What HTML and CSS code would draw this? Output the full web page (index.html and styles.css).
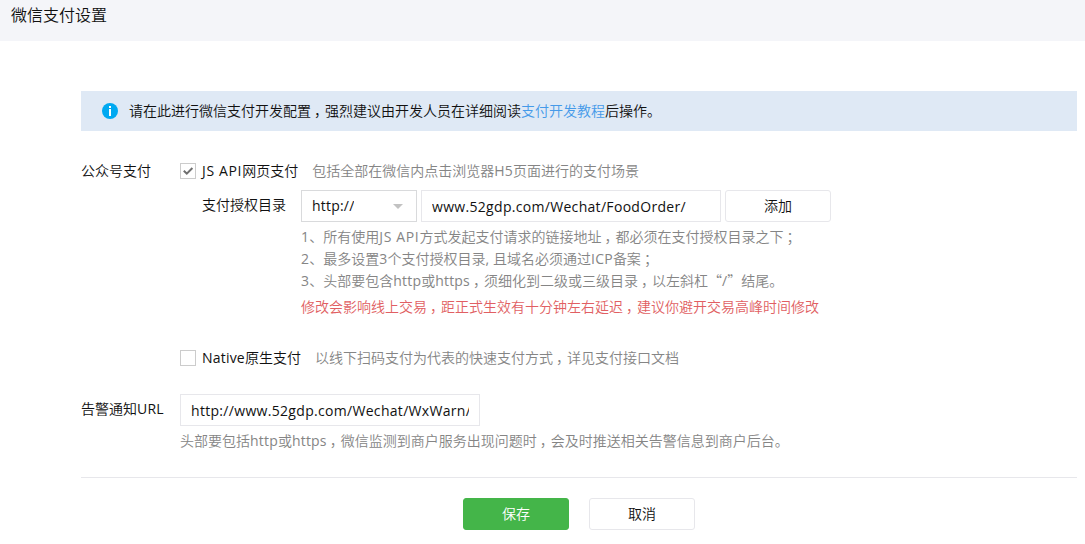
FILE: index.html
```html
<!DOCTYPE html>
<html lang="zh-CN">
<head>
<meta charset="utf-8">
<title>微信支付设置</title>
<link rel="stylesheet" href="styles.css">
</head>
<body>
<header class="page-header"><h1>微信支付设置</h1></header>
<main class="content">
  <div class="notice">
    <svg class="notice-icon" width="16" height="16" viewBox="0 0 16 16"><circle cx="8" cy="8" r="8" fill="#00a9f1"/><path d="M7 3h2v2H7zM7 6h2v7H7z" fill="#fff"/></svg>
    <p>请在此进行微信支付开发配置<span class="mark">，</span>强烈建议由开发人员在详细阅读<a class="link">支付开发教程</a>后操作。</p>
  </div>
  <section class="group">
    <div class="group-label">公众号支付</div>
    <div class="group-body">
      <label class="option">
        <span class="checkbox"><svg width="14" height="14" viewBox="0 0 14 14"><path d="M2.8 6.7 5.8 9.7 11.4 4" fill="none" stroke="#707070" stroke-width="2"/></svg></span>
        <span class="option-name"><span class="latin wide">JS API</span>网页支付</span>
        <span class="option-desc">包括全部在微信内点击浏览器<span class="latin">H5</span>页面进行的支付场景</span>
      </label>
      <div class="directory">
        <div class="directory-label">支付授权目录</div>
        <div class="directory-body">
          <div class="controls">
            <div class="select"><span class="latin field-text">http://</span><svg width="10" height="5" viewBox="0 0 10 5"><path d="M0 0h10L5 5z" fill="#c2c2c2"/></svg></div>
            <div class="input"><span class="latin field-text">www.52gdp.com/Wechat/FoodOrder/</span></div>
            <button class="btn">添加</button>
          </div>
          <ol class="tips">
            <li><span class="latin">1</span>、所有使用<span class="latin wide">JS API</span>方式发起支付请求的链接地址<span class="mark">，</span>都必须在支付授权目录之下<span class="mark">；</span></li>
            <li><span class="latin">2</span>、最多设置<span class="latin">3</span>个支付授权目录<span class="latin">, </span>且域名必须通过<span class="latin">ICP</span>备案<span class="mark">；</span></li>
            <li><span class="latin">3</span>、头部要包含<span class="latin">http</span>或<span class="latin">https</span><span class="mark">，</span>须细化到二级或三级目录<span class="mark">，</span>以左斜杠<span class="quote">“</span><span class="latin">/</span><span class="quote">”</span>结尾。</li>
          </ol>
          <p class="warning">修改会影响线上交易<span class="mark">，</span>距正式生效有十分钟左右延迟<span class="mark">，</span>建议你避开交易高峰时间修改</p>
        </div>
      </div>
      <label class="option option-native">
        <span class="checkbox"></span>
        <span class="option-name"><span class="latin">Native</span>原生支付</span>
        <span class="option-desc">以线下扫码支付为代表的快速支付方式<span class="mark">，</span>详见支付接口文档</span>
      </label>
    </div>
  </section>
  <section class="group group-alarm">
    <div class="group-label">告警通知<span class="latin">URL</span></div>
    <div class="group-body">
      <div class="input"><span class="latin field-text">http://www.52gdp.com/Wechat/WxWarn/</span></div>
      <p class="alarm-tip">头部要包括<span class="latin">http</span>或<span class="latin">https</span><span class="mark">，</span>微信监测到商户服务出现问题时<span class="mark">，</span>会及时推送相关告警信息到商户后台。</p>
    </div>
  </section>
  <footer class="actions">
    <button class="btn btn-primary">保存</button>
    <button class="btn">取消</button>
  </footer>
</main>
</body>
</html>
```
FILE: styles.css
```css
* { box-sizing: border-box; }
body {
  margin: 0;
  background: #fff;
  color: #111;
  font: 14px/22px "Noto Sans CJK SC", sans-serif;
  font-weight: 350;
  white-space: nowrap;
  overflow: hidden;
}
h1, p, ol { margin: 0; padding: 0; }
.page-header { height: 41px; padding: 2px 0 0 11px; background: #f4f5f9; }
.page-header h1 { font-size: 16px; font-weight: inherit; line-height: 24px; }
.content { padding: 50px 8px 0 81px; }
.latin { font-family: "Open Sans", "Noto Sans", sans-serif; font-weight: 400; line-height: 1; letter-spacing: .2px; }
.wide { letter-spacing: .65px; }
.mark { margin-left: 3px; letter-spacing: -3px; }
.quote { display: inline-block; width: 14px; line-height: 1; }
.notice { display: flex; align-items: center; gap: 11px; height: 40px; padding-left: 21px; background: #dfe9f5; }
.notice p { padding-bottom: 2px; }
.notice-icon { display: block; }
.link { color: #459ae9; }
.group { display: flex; margin-top: 28px; }
.group-label { width: 99px; flex: none; }
.option { display: flex; height: 22px; }
.checkbox { width: 16px; height: 16px; margin: 4px 6px 0 0; border: 1px solid #ccc; }
.checkbox svg { display: block; }
.option-desc { margin-left: 14px; color: #858585; }
.directory { display: flex; margin: 9px 0 0 22px; }
.directory-label { width: 99px; padding-top: 3px; }
.controls { display: flex; gap: 4px; }
.select, .input { display: flex; align-items: center; height: 32px; padding: 0 10px; border: 1px solid #e7e7eb; overflow: hidden; }
.select { width: 116px; justify-content: space-between; padding-right: 13px; border-color: #d9dadc; }
.input { width: 300px; }
.field-text { overflow: hidden; line-height: 22px; }
.input .field-text { padding-top: 1px; letter-spacing: .31px; }
.btn { width: 106px; height: 32px; padding: 0 0 2px; border: 1px solid #e7e7eb; border-radius: 3px; background: #fff; color: #111; font: inherit; }
.tips { margin-top: 3px; color: #858585; list-style: none; }
.tips li { height: 22px; }
.warning { margin-top: 4px; color: #e15f63; }
.option-native { margin-top: 29px; }
.group-alarm { margin-top: 26px; }
.group-alarm .group-label { padding-top: 3px; }
.alarm-tip { margin-top: 3px; color: #858585; }
.actions { display: flex; justify-content: center; gap: 20px; margin-top: 26px; padding-top: 20px; border-top: 1px solid #e7e7eb; }
.btn-primary { border-color: #44b549; background: #44b549; color: #fff; }
```
